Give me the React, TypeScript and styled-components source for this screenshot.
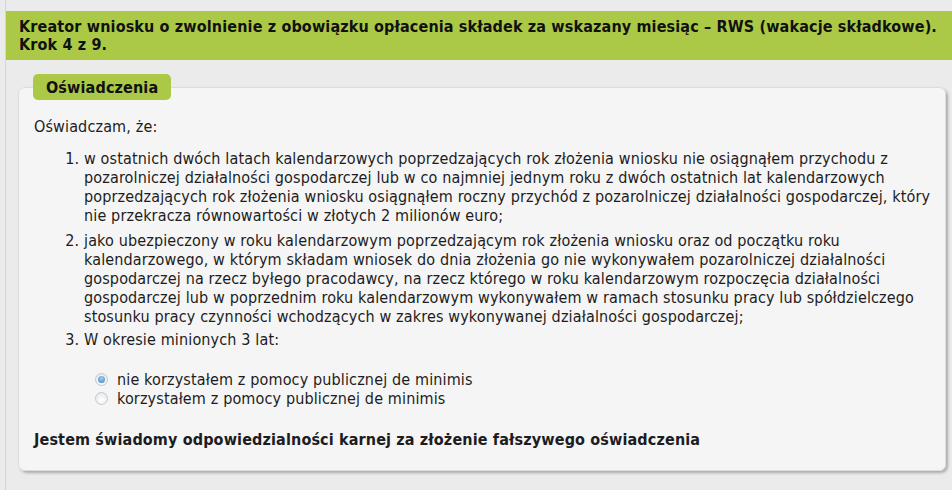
import React from "react";
import styled, { createGlobalStyle } from "styled-components";

const Global = createGlobalStyle`
  html, body { margin: 0; padding: 0; background: #ebebeb; }
  body {
    font-family: "DejaVu Sans Condensed", "DejaVu Sans", sans-serif;
    color: #1c1c22;
    letter-spacing: 0.14px;
  }
`;

const Page = styled.div`
  margin-left: 5px;
  border-left: 1px solid #d6d6d6;
  padding-top: 11px;
  min-height: 479px;
`;

const Header = styled.div`
  background: #abc946;
  padding: 7px 13px 6px 13px;
  font-weight: bold;
  font-size: 16px;
  line-height: 18px;
  color: #111;
`;

const Panel = styled.fieldset`
  position: relative;
  margin: 27px 11px 0 12px;
  padding: 29px 15px 21px 15px;
  background: #f5f5f5;
  border: 1px solid #dcdcdc;
  border-radius: 7px;
  box-shadow: 2px 2px 3px rgba(0, 0, 0, 0.28);
  font-size: 16px;
  line-height: 19px;
`;

const Legend = styled.div`
  position: absolute;
  top: -14px;
  left: 14px;
  height: 26px;
  padding: 0 13px;
  display: flex;
  align-items: center;
  background: #abc946;
  border-radius: 5px;
  font-weight: bold;
  font-size: 16px;
  color: #111;
`;

const Intro = styled.p`
  margin: 0 0 13px 0;
`;

const List = styled.ol`
  margin: 0;
  padding-left: 50px;
`;

const Item = styled.li<{ $gap?: number }>`
  margin-bottom: ${(p) => p.$gap ?? 6}px;
  white-space: nowrap;
`;

const Options = styled.div`
  display: flex;
  flex-direction: column;
  margin: 21px 0 0 61px;
`;

const Option = styled.label`
  display: flex;
  align-items: center;
  gap: 9px;
  height: 19px;
`;

const Radio = styled.span<{ $checked?: boolean }>`
  width: 13px;
  height: 13px;
  flex: none;
  box-sizing: border-box;
  border-radius: 50%;
  border: 1px solid #c2c8d0;
  background: radial-gradient(circle at 50% 65%, #ffffff 0%, #e9edf1 70%, #dde2e7 100%);
  display: flex;
  align-items: center;
  justify-content: center;
  &::after {
    content: "";
    display: ${(p) => (p.$checked ? "block" : "none")};
    width: 7px;
    height: 7px;
    border-radius: 50%;
    background: radial-gradient(circle at 50% 35%, #a9cbe8 0%, #5d98c9 70%, #4b86b8 100%);
  }
`;

const Statement = styled.p`
  margin: 22px 0 0 0;
  font-weight: bold;
`;

export default function App() {
  return (
    <>
      <Global />
      <Page>
        <Header>
          Kreator wniosku o zwolnienie z obowiązku opłacenia składek za wskazany miesiąc – RWS (wakacje składkowe).
          <br />
          Krok 4 z 9.
        </Header>
        <Panel>
          <Legend>Oświadczenia</Legend>
          <Intro>Oświadczam, że:</Intro>
          <List>
            <Item>
              w ostatnich dwóch latach kalendarzowych poprzedzających rok złożenia wniosku nie osiągnąłem przychodu z
              <br />
              pozarolniczej działalności gospodarczej lub w co najmniej jednym roku z dwóch ostatnich lat kalendarzowych
              <br />
              poprzedzających rok złożenia wniosku osiągnąłem roczny przychód z pozarolniczej działalności gospodarczej, który
              <br />
              nie przekracza równowartości w złotych 2 milionów euro;
            </Item>
            <Item $gap={4}>
              jako ubezpieczony w roku kalendarzowym poprzedzającym rok złożenia wniosku oraz od początku roku
              <br />
              kalendarzowego, w którym składam wniosek do dnia złożenia go nie wykonywałem pozarolniczej działalności
              <br />
              gospodarczej na rzecz byłego pracodawcy, na rzecz którego w roku kalendarzowym rozpoczęcia działalności
              <br />
              gospodarczej lub w poprzednim roku kalendarzowym wykonywałem w ramach stosunku pracy lub spółdzielczego
              <br />
              stosunku pracy czynności wchodzących w zakres wykonywanej działalności gospodarczej;
            </Item>
            <Item $gap={0}>W okresie minionych 3 lat:</Item>
          </List>
          <Options>
            <Option>
              <Radio $checked />
              nie korzystałem z pomocy publicznej de minimis
            </Option>
            <Option>
              <Radio />
              korzystałem z pomocy publicznej de minimis
            </Option>
          </Options>
          <Statement>Jestem świadomy odpowiedzialności karnej za złożenie fałszywego oświadczenia</Statement>
        </Panel>
      </Page>
    </>
  );
}
